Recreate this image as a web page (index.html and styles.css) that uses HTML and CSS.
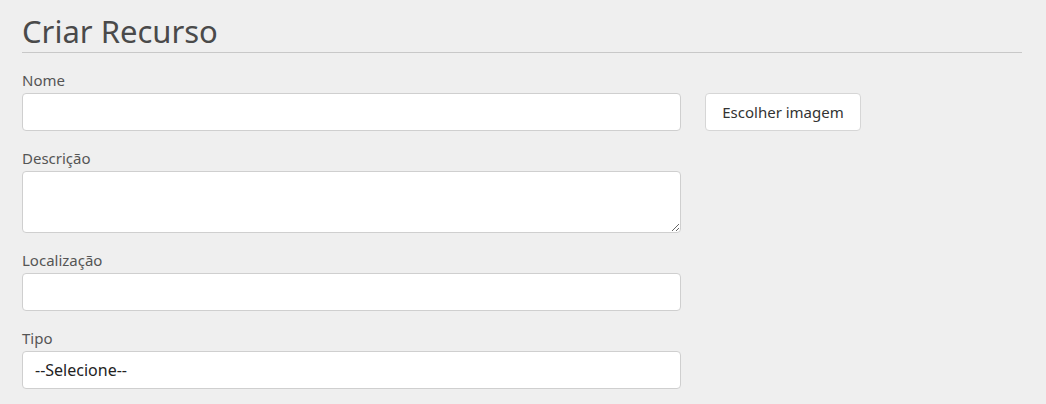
FILE: index.html
```
<!DOCTYPE html>
<html lang="pt">
<head>
<meta charset="utf-8">
<title>Criar Recurso</title>
<link rel="stylesheet" href="styles.css">
</head>
<body>
<main class="page">
  <h1 class="title">Criar Recurso</h1>
  <form class="form">
    <div class="row">
      <div class="group main-col">
        <label class="label" for="nome">Nome</label>
        <input class="control" id="nome" type="text">
      </div>
      <div class="side-col">
        <button type="button" class="btn">Escolher imagem</button>
      </div>
    </div>
    <div class="group main-col">
      <label class="label" for="desc">Descrição</label>
      <textarea class="control area" id="desc"></textarea>
    </div>
    <div class="group main-col">
      <label class="label" for="loc">Localização</label>
      <input class="control" id="loc" type="text">
    </div>
    <div class="group main-col">
      <label class="label" for="tipo">Tipo</label>
      <select class="control select" id="tipo">
        <option>--Selecione--</option>
      </select>
    </div>
  </form>
</main>
</body>
</html>
```
FILE: styles.css
```
html, body {
  margin: 0;
  padding: 0;
  background: #efefef;
}
body {
  font-family: "Noto Sans", "Open Sans", sans-serif;
  color: #4a4a4a;
}
.page {
  width: 1000px;
  margin-left: 22px;
  padding-top: 12px;
}
.title {
  margin: 0;
  font-size: 31px;
  font-weight: 400;
  line-height: 38px;
  color: #4a4a4a;
  padding-bottom: 2px;
  border-bottom: 1px solid #c8c8c8;
}
.form {
  padding-top: 18px;
}
.row {
  display: flex;
  gap: 24px;
}
.main-col {
  width: 659px;
}
.side-col {
  padding-top: 22px;
}
.group {
  display: flex;
  flex-direction: column;
  margin-bottom: 18px;
}
.label {
  font-size: 15px;
  line-height: 18px;
  margin-bottom: 4px;
  color: #555;
}
.control {
  box-sizing: border-box;
  width: 100%;
  height: 38px;
  margin: 0;
  padding: 6px 12px;
  border: 1px solid #cfcfcf;
  border-radius: 4px;
  background: #fff;
  font-family: inherit;
  font-size: 16px;
  color: #222;
}
.area {
  height: 62px;
  resize: vertical;
}
.select {
  appearance: none;
  -webkit-appearance: none;
}
.btn {
  box-sizing: border-box;
  height: 38px;
  width: 156px;
  border: 1px solid #d6d6d6;
  border-radius: 4px;
  background: #fff;
  font-family: inherit;
  font-size: 15px;
  color: #333;
  padding: 0 12px;
}
```
